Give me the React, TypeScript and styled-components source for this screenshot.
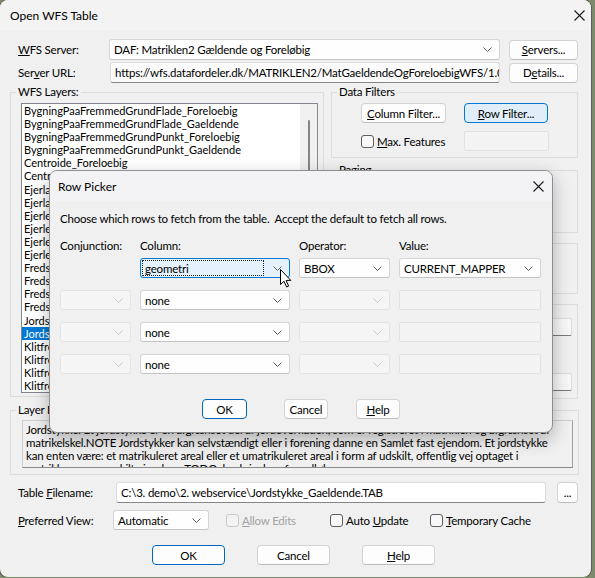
import React from 'react';
import styled, { createGlobalStyle, css } from 'styled-components';

const FONT = `Lato, "Noto Sans", sans-serif`;

const GlobalStyle = createGlobalStyle`
  html, body { margin: 0; padding: 0; }
  body {
    background: #7d8a6c;
    font-family: ${FONT};
    font-size: 11.5px;
    letter-spacing: -0.2px;
    color: #000;
  }
  * { box-sizing: border-box; }
`;

const LAYERS = [
  'BygningPaaFremmedGrundFlade_Foreloebig',
  'BygningPaaFremmedGrundFlade_Gaeldende',
  'BygningPaaFremmedGrundPunkt_Foreloebig',
  'BygningPaaFremmedGrundPunkt_Gaeldende',
  'Centroide_Foreloebig',
  'Centroide_Gaeldende',
  'Ejerlav_Foreloebig',
  'Ejerlav_Gaeldende',
  'Ejerlejlighed_Foreloebig',
  'Ejerlejlighed_Gaeldende',
  'Ejerlejlighedslod_Foreloebig',
  'Ejerlejlighedslod_Gaeldende',
  'Fredskov_Foreloebig',
  'Fredskov_Gaeldende',
  'Fredskovslinje_Foreloebig',
  'Fredskovslinje_Gaeldende',
  'Jordstykke_Foreloebig',
  'Jordstykke_Gaeldende',
  'Klitfredning_Foreloebig',
  'Klitfredning_Gaeldende',
  'Klitfredningslinje_Foreloebig',
  'Klitfredningslinje_Gaeldende',
  'Lodflade_Foreloebig',
];

const DESCRIPTION = [
  'Jordstykke: Et jordstykke er en afgrænset del af jordoverfladen, som er registreret i matriklen og afgrænset af',
  'matrikelskel.NOTE Jordstykker kan selvstændigt eller i forening danne en Samlet fast ejendom. Et jordstykke',
  'kan enten være: et matrikuleret areal eller et umatrikuleret areal i form af udskilt, offentlig vej optaget i',
  'matriklen som særskilt ejendom, TODO: beskrivelse af vandløb.',
];

const PICKER_COLUMNS = '71px 150px 91px 142px';

const Chevron: React.FC<{ color?: string }> = ({ color = '#5c5c5c' }) => (
  <svg width="9" height="5" viewBox="0 0 9 5">
    <path d="M0.5 0.5 L4.5 4.5 L8.5 0.5" fill="none" stroke={color} strokeWidth="1" />
  </svg>
);

const CloseIcon: React.FC = () => (
  <svg width="11" height="11" viewBox="0 0 11 11">
    <path d="M0.5 0.5 L10.5 10.5 M10.5 0.5 L0.5 10.5" stroke="#1b1b1b" strokeWidth="1.1" />
  </svg>
);

const Acc: React.FC<{ text: string; at: number }> = ({ text, at }) => (
  <>
    {text.slice(0, at)}
    <u>{text[at]}</u>
    {text.slice(at + 1)}
  </>
);

export default function App() {
  return (
    <>
      <GlobalStyle />
      <Window>
        <TitleBar>
          <TitleText>Open WFS Table</TitleText>
          <CloseButton>
            <CloseIcon />
          </CloseButton>
        </TitleBar>

        <Body>
          <ServerGrid>
            <Label>
              <Acc text="WFS Server:" at={0} />
            </Label>
            <Combo>
              <ComboText>DAF: Matriklen2 Gældende og Foreløbig</ComboText>
              <Chevron />
            </Combo>
            <SideButton>
              <Acc text="Servers..." at={0} />
            </SideButton>
            <Label>
              <Acc text="Server URL:" at={3} />
            </Label>
            <Edit $indent={1}>
              https://wfs.datafordeler.dk/MATRIKLEN2/MatGaeldendeOgForeloebigWFS/1.0.0/WFS
            </Edit>
            <SideButton>
              <Acc text="Details..." at={1} />
            </SideButton>
          </ServerGrid>

          <Middle>
            <Group>
              <Legend>WFS Layers:</Legend>
              <LayersInner>
                <ListBox>
                  <ListItems>
                    {LAYERS.map((name) => (
                      <ListItem key={name} $selected={name === 'Jordstykke_Gaeldende'}>
                        {name}
                      </ListItem>
                    ))}
                  </ListItems>
                  <ScrollTrack>
                    <ScrollThumb />
                  </ScrollTrack>
                </ListBox>
              </LayersInner>
            </Group>

            <RightColumn>
              <Group>
                <Legend>Data Filters</Legend>
                <FiltersInner>
                  <Button $w={85}>
                    <Acc text="Column Filter..." at={0} />
                  </Button>
                  <Button $w={84} $hot>
                    <Acc text="Row Filter..." at={0} />
                  </Button>
                  <CheckRow>
                    <CheckBox />
                    <span>
                      <Acc text="Max. Features" at={0} />
                    </span>
                  </CheckRow>
                  <DisabledEdit $w={85} />
                </FiltersInner>
              </Group>
              <Group $gap={5}>
                <Legend>Paging</Legend>
                <EmptyInner $h={55} />
              </Group>
              <Group $gap={3}>
                <Legend>Spatial</Legend>
                <EmptyInner $h={43} />
              </Group>
              <Group $gap={3}>
                <Legend>Cache</Legend>
                <CacheInner>
                  <SmallEdit />
                  <SmallEdit />
                </CacheInner>
              </Group>
            </RightColumn>
          </Middle>

          <Group $gap={4}>
            <Legend>Layer Description</Legend>
            <DescInner>
              <DescBox>
                {DESCRIPTION.map((line) => (
                  <DescLine key={line}>{line}</DescLine>
                ))}
              </DescBox>
            </DescInner>
          </Group>

          <FileRow>
            <Label>
              <Acc text="Table Filename:" at={6} />
            </Label>
            <Edit $indent={3} $white>
              C:\3. demo\2. webservice\Jordstykke_Gaeldende.TAB
            </Edit>
            <Button $w={21}>...</Button>
          </FileRow>

          <OptionsRow>
            <Label $w={103}>
              <Acc text="Preferred View:" at={0} />
            </Label>
            <Combo $w={96}>
              <ComboText>Automatic</ComboText>
              <Chevron />
            </Combo>
            <CheckRow $w={104} $ml={17} $disabled>
              <CheckBox $disabled />
              <span>
                <Acc text="Allow Edits" at={0} />
              </span>
            </CheckRow>
            <CheckRow $w={100}>
              <CheckBox />
              <span>
                <Acc text="Auto Update" at={5} />
              </span>
            </CheckRow>
            <CheckRow>
              <CheckBox />
              <span>
                <Acc text="Temporary Cache" at={0} />
              </span>
            </CheckRow>
          </OptionsRow>

          <ButtonRow>
            <Button $w={73} $primary>
              OK
            </Button>
            <Button $w={73}>Cancel</Button>
            <Button $w={73}>
              <Acc text="Help" at={0} />
            </Button>
          </ButtonRow>
        </Body>

        <Dialog>
          <DialogTitleBar>
            <TitleText>Row Picker</TitleText>
            <CloseButton>
              <CloseIcon />
            </CloseButton>
          </DialogTitleBar>
          <DialogBody>
            <Intro>Choose which rows to fetch from the table.&nbsp; Accept the default to fetch all rows.</Intro>
            <PickerHeaders>
              <span>Conjunction:</span>
              <span>Column:</span>
              <span>Operator:</span>
              <span>Value:</span>
            </PickerHeaders>
            <PickerRows>
              <span />
              <Combo $focused>
                <FocusRing>geometri</FocusRing>
                <Chevron />
              </Combo>
              <Combo>
                <ComboText>BBOX</ComboText>
                <Chevron />
              </Combo>
              <Combo>
                <ComboText>CURRENT_MAPPER</ComboText>
                <Chevron />
              </Combo>

              {[0, 1, 2].map((i) => (
                <React.Fragment key={i}>
                  <Combo $disabled>
                    <ComboText />
                    <Chevron color="#c6c6c6" />
                  </Combo>
                  <Combo>
                    <ComboText>none</ComboText>
                    <Chevron />
                  </Combo>
                  <Combo $disabled>
                    <ComboText />
                    <Chevron color="#c6c6c6" />
                  </Combo>
                  <DisabledEdit />
                </React.Fragment>
              ))}
            </PickerRows>
            <DialogButtons>
              <Button $w={45} $primary>
                OK
              </Button>
              <Button $w={44} $ml={37}>
                Cancel
              </Button>
              <Button $w={44} $ml={28}>
                <Acc text="Help" at={0} />
              </Button>
            </DialogButtons>
          </DialogBody>
        </Dialog>

        <Pointer viewBox="0 0 12 19" width="12" height="19">
          <path
            d="M0.5 0.5 L0.5 15.5 L4 12.2 L6.6 18 L8.6 17.1 L6.1 11.4 L10.8 11.4 Z"
            fill="#fff"
            stroke="#000"
            strokeWidth="1"
            strokeLinejoin="round"
          />
        </Pointer>
      </Window>
    </>
  );
}

const Window = styled.div`
  position: relative;
  width: 591px;
  height: 577px;
  background: #f0f0f0;
  border-radius: 8px;
  box-shadow: 0 0 0 1px rgba(60, 60, 60, 0.55);
  overflow: hidden;
`;

const TitleBar = styled.div`
  height: 31px;
  background: #f3f3f3;
  display: flex;
  align-items: center;
  justify-content: space-between;
  padding: 0 6px 0 10px;
`;

const TitleText = styled.span`
  font-size: 12px;
  letter-spacing: 0;
`;

const CloseButton = styled.div`
  width: 12px;
  height: 12px;
  display: flex;
  align-items: center;
  justify-content: center;
`;

const Body = styled.div`
  padding: 8px 12px 0 10px;
  display: flex;
  flex-direction: column;
`;

const ServerGrid = styled.div`
  display: grid;
  grid-template-columns: 99px 391px 1fr;
  grid-template-rows: 21px 21px;
  row-gap: 2px;
  align-items: center;
`;

const Label = styled.div<{ $w?: number }>`
  padding-left: 8px;
  white-space: nowrap;
  ${({ $w }) => $w && `width: ${$w}px; flex: none;`}
`;

const Combo = styled.div<{ $w?: number; $focused?: boolean; $disabled?: boolean }>`
  display: flex;
  align-items: center;
  min-width: 0;
  height: ${({ $w }) => ($w ? 20 : 21)}px;
  ${({ $w }) => $w && `width: ${$w}px; flex: none;`}
  background: #fefefe;
  border: 1px solid #d5d5d5;
  border-bottom-color: #c4c4c4;
  border-radius: 3px;
  padding: 0 7px 0 3px;
  white-space: nowrap;
  overflow: hidden;
  ${({ $focused }) =>
    $focused &&
    css`
      background: #e5f1fb;
      border-color: #0078d7;
      padding: 1px 7px 1px 1px;
    `}
  ${({ $disabled }) =>
    $disabled &&
    css`
      background: #f5f5f5;
      border-color: #e3e3e3;
    `}
`;

const ComboText = styled.span`
  flex: 1;
  overflow: hidden;
  padding-left: 1px;
`;

const FocusRing = styled.span`
  flex: 1;
  align-self: stretch;
  display: flex;
  align-items: center;
  border: 1px dotted #222;
  padding-left: 2px;
  margin-right: 9px;
`;

const Edit = styled.div<{ $indent: number; $white?: boolean }>`
  height: 21px;
  min-width: 0;
  margin-left: ${({ $indent }) => $indent}px;
  display: flex;
  align-items: center;
  padding-left: 4px;
  background: ${({ $white }) => ($white ? '#ffffff' : '#fbfbfb')};
  border: 1px solid #dcdcdc;
  border-bottom-color: #868686;
  border-radius: 3px;
  white-space: nowrap;
  overflow: hidden;
`;

const Button = styled.button<{ $w: number; $primary?: boolean; $hot?: boolean; $ml?: number }>`
  width: ${({ $w }) => $w}px;
  height: 20px;
  margin-left: ${({ $ml }) => $ml ?? 0}px;
  padding: 0;
  font-family: ${FONT};
  font-size: 11.5px;
  letter-spacing: -0.2px;
  color: #000;
  background: #fdfdfd;
  border: 1px solid #d3d3d3;
  border-bottom-color: #bdbdbd;
  border-radius: 4px;
  white-space: nowrap;
  ${({ $primary }) =>
    $primary &&
    css`
      border: 1px solid #0067c0;
    `}
  ${({ $hot }) =>
    $hot &&
    css`
      background: #e0eef9;
      border: 1px solid #0078d4;
    `}
`;

const SideButton = styled(Button).attrs({ $w: 69 })`
  margin-left: 9px;
`;

const Middle = styled.div`
  margin-top: 2px;
  display: grid;
  grid-template-columns: 314px 247px;
  column-gap: 7px;
  align-items: start;
`;

const Group = styled.fieldset<{ $gap?: number }>`
  margin: ${({ $gap }) => $gap ?? 0}px 0 0 0;
  padding: 0;
  border: 1px solid #dcdcdc;
  min-width: 0;
`;

const Legend = styled.legend`
  margin-left: 5px;
  padding: 0 2px;
  line-height: 14px;
  height: 14px;
`;

const LayersInner = styled.div`
  padding: 4px 5px 3px 10px;
`;

const ListBox = styled.div`
  display: flex;
  height: 290px;
  background: #fff;
  border: 1px solid #828790;
  overflow: hidden;
`;

const ListItems = styled.div`
  flex: 1;
  overflow: hidden;
`;

const ListItem = styled.div<{ $selected?: boolean }>`
  height: 13.1px;
  line-height: 13px;
  font-size: 11px;
  letter-spacing: 0;
  padding-left: 2px;
  white-space: nowrap;
  ${({ $selected }) =>
    $selected &&
    css`
      background: #0078d7;
      color: #fff;
    `}
`;

const ScrollTrack = styled.div`
  width: 17px;
  background: #f0f0f0;
  display: flex;
  justify-content: center;
  padding-top: 16px;
`;

const ScrollThumb = styled.div`
  width: 2px;
  height: 140px;
  background: #858585;
  border-radius: 1px;
`;

const RightColumn = styled.div`
  display: flex;
  flex-direction: column;
`;

const FiltersInner = styled.div`
  display: grid;
  grid-template-columns: 85px 84px;
  grid-template-rows: 20px 20px;
  column-gap: 18px;
  row-gap: 8px;
  padding: 4px 0 6px 29px;
  align-items: center;
`;

const CheckRow = styled.label<{ $w?: number; $ml?: number; $disabled?: boolean }>`
  display: flex;
  align-items: center;
  gap: 3px;
  white-space: nowrap;
  margin-left: ${({ $ml }) => $ml ?? 0}px;
  ${({ $w }) => $w && `width: ${$w}px; flex: none;`}
  color: ${({ $disabled }) => ($disabled ? '#a2a2a2' : '#000')};
`;

const CheckBox = styled.span<{ $disabled?: boolean }>`
  width: 13px;
  height: 13px;
  flex: none;
  border: 1px solid ${({ $disabled }) => ($disabled ? '#c9c9c9' : '#5d5d5d')};
  border-radius: 3px;
  background: ${({ $disabled }) => ($disabled ? '#f3f3f3' : '#f8f8f8')};
`;

const DisabledEdit = styled.div<{ $w?: number }>`
  height: 20px;
  ${({ $w }) => $w && `width: ${$w}px;`}
  background: #f3f3f3;
  border: 1px solid #e1e1e1;
  border-radius: 2px;
`;

const EmptyInner = styled.div<{ $h: number }>`
  height: ${({ $h }) => $h}px;
`;

const CacheInner = styled.div`
  display: flex;
  flex-direction: column;
  align-items: flex-end;
  gap: 37px;
  padding: 7px 5px 7px 0;
`;

const SmallEdit = styled.div`
  width: 110px;
  height: 18px;
  background: #f7f7f7;
  border: 1px solid #dcdcdc;
  border-bottom-color: #7a7a7a;
  border-radius: 2px;
`;

const DescInner = styled.div`
  padding: 3px 5px 6px 11px;
`;

const DescBox = styled.div`
  height: 48px;
  padding: 2px 0 0 3px;
  background: #f0f0f0;
  border: 1px solid #cfcfcf;
  border-bottom-color: #8a8a8a;
  border-right-color: #a0a0a0;
  overflow: hidden;
`;

const DescLine = styled.div`
  line-height: 13px;
  white-space: nowrap;
`;

const FileRow = styled.div`
  margin-top: 7px;
  display: grid;
  grid-template-columns: 103px 433px 21px;
  align-items: center;
  & > button {
    margin-left: 11px;
    height: 21px;
  }
`;

const OptionsRow = styled.div`
  margin-top: 7px;
  display: flex;
  align-items: center;
  height: 20px;
`;

const ButtonRow = styled.div`
  margin-top: 15px;
  display: flex;
  gap: 32px;
  padding-left: 142px;
`;

const Dialog = styled.div`
  position: absolute;
  left: 49px;
  top: 170px;
  width: 504px;
  height: 263px;
  background: #f0f0f0;
  border: 1px solid #8e8e8e;
  border-radius: 8px;
  box-shadow: 0 6px 18px rgba(0, 0, 0, 0.28);
  overflow: hidden;
  display: flex;
  flex-direction: column;
`;

const DialogTitleBar = styled.div`
  height: 30px;
  flex: none;
  background: #f3f3f6;
  display: flex;
  align-items: center;
  justify-content: space-between;
  padding: 0 8px 0 8px;
`;

const DialogBody = styled.div`
  flex: 1;
  padding: 10px 0 0 10px;
`;

const Intro = styled.div`
  line-height: 15px;
  white-space: nowrap;
`;

const PickerHeaders = styled.div`
  margin-top: 13px;
  display: grid;
  grid-template-columns: ${PICKER_COLUMNS};
  column-gap: 9px;
  line-height: 14px;
  white-space: nowrap;
`;

const PickerRows = styled.div`
  margin-top: 5px;
  display: grid;
  grid-template-columns: ${PICKER_COLUMNS};
  grid-auto-rows: 20px;
  column-gap: 9px;
  row-gap: 12px;
  & > * {
    height: 20px;
  }
`;

const DialogButtons = styled.div`
  margin-top: 25px;
  display: flex;
  padding-left: 142px;
`;

const Pointer = styled.svg`
  position: absolute;
  left: 280px;
  top: 269px;
`;
